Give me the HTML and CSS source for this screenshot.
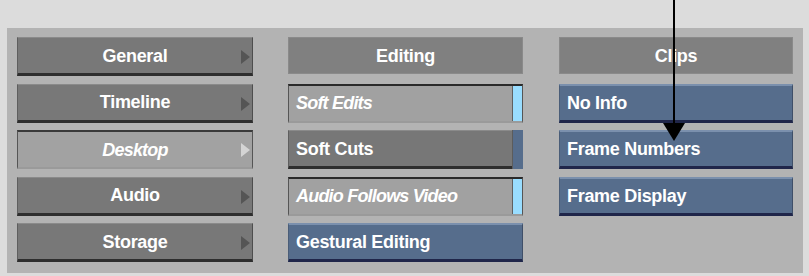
FILE: index.html
```html
<!DOCTYPE html>
<html>
<head>
<meta charset="utf-8">
<link rel="stylesheet" href="styles.css">
</head>
<body>
<div class="panel">
  <div class="col">
    <div class="btn menu">General<span class="tri"></span></div>
    <div class="btn menu">Timeline<span class="tri"></span></div>
    <div class="btn menu sel">Desktop<span class="tri"></span></div>
    <div class="btn menu">Audio<span class="tri"></span></div>
    <div class="btn menu">Storage<span class="tri"></span></div>
  </div>
  <div class="col">
    <div class="head">Editing</div>
    <div class="btn toggle on">Soft Edits<span class="strip"></span></div>
    <div class="btn toggle">Soft Cuts<span class="strip"></span></div>
    <div class="btn toggle on">Audio Follows Video<span class="strip"></span></div>
    <div class="btn blue">Gestural Editing</div>
  </div>
  <div class="col">
    <div class="head">Clips</div>
    <div class="btn blue">No Info</div>
    <div class="btn blue">Frame Numbers</div>
    <div class="btn blue">Frame Display</div>
  </div>
</div>
<div class="pointer"><div class="line"></div><div class="head-tri"></div></div>
</body>
</html>
```

FILE: styles.css
```css
html, body {
  margin: 0;
  padding: 0;
  background: #dcdcdc;
  width: 809px;
  height: 276px;
  overflow: hidden;
  font-family: "Liberation Sans", Arial, sans-serif;
}
.panel {
  position: relative;
  margin: 28px 0 0 7px;
  width: 796px;
  height: 245px;
  box-sizing: border-box;
  background: #b3b3b3;
  padding: 9px 9px 0 10px;
  display: grid;
  grid-template-columns: 236px 235px 235px;
  column-gap: 35px;
}
.col {
  display: flex;
  flex-direction: column;
  gap: 7.5px;
}
.col:nth-child(3) { margin-left: 1px; }
.btn, .head {
  position: relative;
  height: 39px;
  box-sizing: border-box;
  display: flex;
  align-items: center;
  padding-top: 1px;
  color: #fff;
  font-size: 18px;
  font-weight: bold;
  letter-spacing: -0.3px;
  white-space: nowrap;
}
.head {
  background: #808080;
  justify-content: center;
  height: 37px;
  margin-bottom: 2px;
  border: 1px solid #8a8a8a;
}
.menu {
  justify-content: center;
  background: #787878;
  border-top: 1px solid #8a8a8a;
  border-left: 1px solid #5e5e5e;
  border-right: 1px solid #4e4e4e;
  border-bottom: 3px solid #2e2e2e;
}
.menu .tri {
  position: absolute;
  right: 2px;
  top: 12px;
  width: 0;
  height: 0;
  border-top: 7px solid transparent;
  border-bottom: 7px solid transparent;
  border-left: 9px solid #555;
}
.sel, .on {
  font-style: italic;
  letter-spacing: -0.8px;
}
.menu.sel {
  background: #a2a2a2;
  border-top: 2px solid #3a3a3a;
  border-left: 1px solid #555;
  border-right: 1px solid #555;
  border-bottom: 2px solid #9a9a9a;
}
.menu.sel .tri { border-left-color: #d4d4d4; top: 11px; }
.toggle {
  padding-left: 7px;
  background: #777;
  border-top: 1px solid #8a8a8a;
  border-left: 1px solid #5e5e5e;
  border-bottom: 3px solid #2e2e2e;
}
.toggle .strip {
  position: absolute;
  right: 0;
  top: -1px;
  bottom: -3px;
  width: 10px;
  background: #566d8c;
  border-left: 1px solid #5c5c5c;
}
.toggle.on {
  background: #a1a1a1;
  border-top: 2px solid #2a2a2a;
  border-left: 1px solid #555;
  border-right: 1px solid #555;
  border-bottom: 2px solid #9a9a9a;
}
.toggle.on .strip {
  background: #99ddff;
  top: 0;
  bottom: 0;
  right: 0;
  width: 9px;
  border-left: 1px solid #606060;
}
.blue {
  padding-left: 7px;
  background: #566d8c;
  border-top: 2px solid #7b90ad;
  border-left: 1px solid #4a5d78;
  border-right: 1px solid #3f4f68;
  border-bottom: 3px solid #20264a;
}
.pointer {
  position: absolute;
  left: 663px;
  top: 0;
  width: 22px;
  height: 142px;
}
.pointer .line {
  position: absolute;
  left: 10px;
  top: 0;
  width: 2px;
  height: 126px;
  background: #000;
}
.pointer .head-tri {
  position: absolute;
  left: 0;
  top: 123px;
  width: 0;
  height: 0;
  border-left: 11px solid transparent;
  border-right: 11px solid transparent;
  border-top: 18px solid #000;
}
```
